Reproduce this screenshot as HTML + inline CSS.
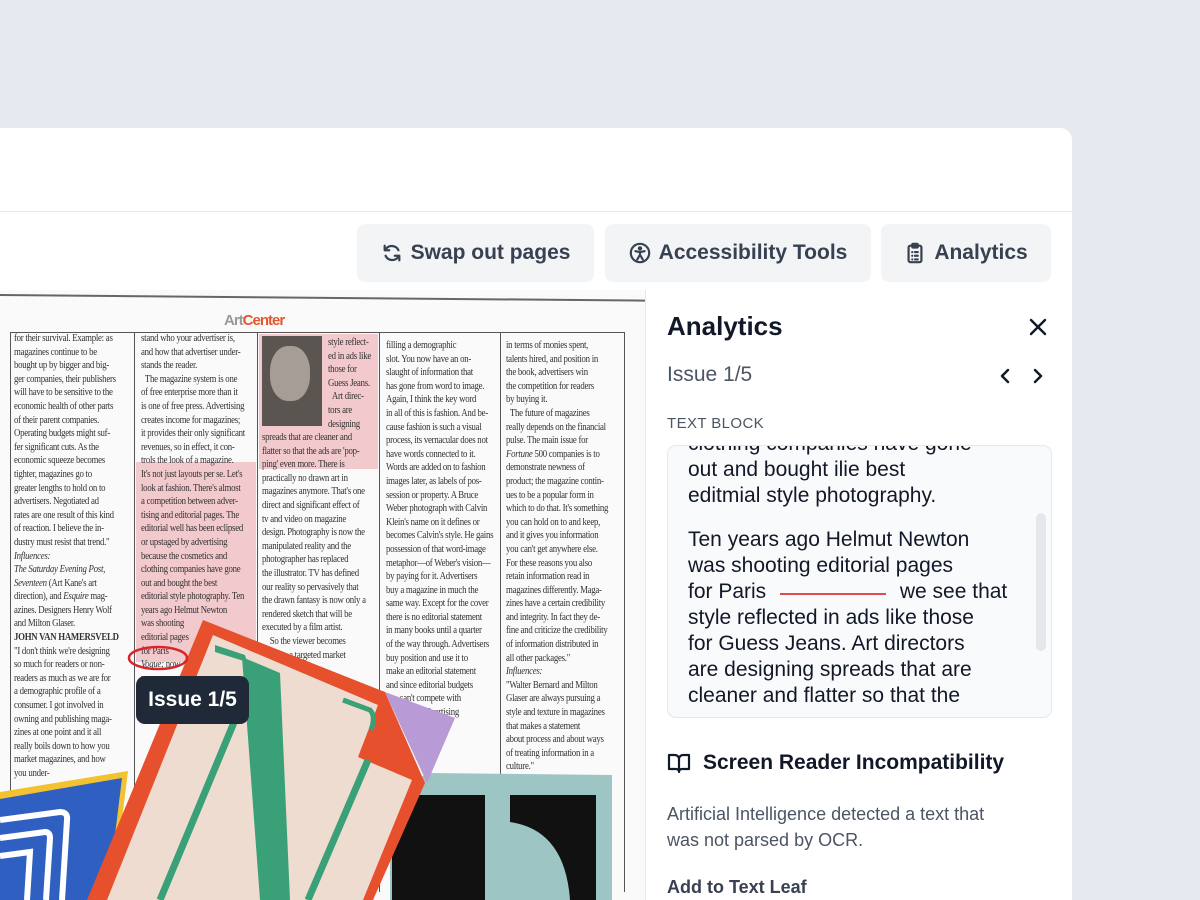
<!DOCTYPE html>
<html><head><meta charset="utf-8"><style>
*{margin:0;padding:0;box-sizing:border-box}
html,body{width:1200px;height:900px;overflow:hidden}
body{background:#e6eaf0;font-family:"Liberation Sans",sans-serif;position:relative}
.card{position:absolute;left:0;top:128px;width:1072px;height:772px;background:#fff;border-radius:0 12px 0 0}
.hr{position:absolute;left:0;top:211px;width:1072px;height:1px;background:#e5e7eb}
.btn{position:absolute;top:224px;height:58px;background:#f3f4f6;border-radius:8px;display:flex;align-items:center;justify-content:center;gap:8px;font-size:21px;color:#374151;font-weight:bold}
.btn svg{width:22px;height:22px}
.mag{position:absolute;left:0;top:290px;width:645px;height:610px;overflow:hidden;background:#fafafa}
.col{position:absolute;font-family:"Liberation Serif",serif;font-size:10px;line-height:13.6px;color:#333;letter-spacing:-0.3px;white-space:nowrap;transform:scaleX(0.88);transform-origin:0 0}
.vl{position:absolute;top:42px;width:1px;background:#555;height:560px}
.side{position:absolute;left:645px;top:290px;width:427px;height:610px;border-left:1px solid #e5e7eb}
</style></head><body>
<div class="card"></div>
<div class="hr"></div>
<div class="btn" style="left:357px;width:237px"><svg viewBox="0 0 24 24" fill="none" stroke="#374151" stroke-width="2.4" stroke-linecap="round" stroke-linejoin="round"><path d="M4 4v5h5M20 20v-5h-5"/><path d="M19 9A8 8 0 0 0 5 8M5 15a8 8 0 0 0 14 1"/></svg>Swap out pages</div>
<div class="btn" style="left:605px;width:266px"><svg viewBox="0 0 24 24" fill="none" stroke="#374151" stroke-width="2.4" stroke-linecap="round" stroke-linejoin="round"><circle cx="12" cy="12" r="10"/><circle cx="12" cy="7" r="1.2" fill="#374151"/><path d="M7 10l5 1 5-1M12 11v3l-3 5M12 14l3 5"/></svg>Accessibility Tools</div>
<div class="btn" style="left:881px;width:170px"><svg viewBox="0 0 24 24" fill="none" stroke="#374151" stroke-width="2.4" stroke-linecap="round" stroke-linejoin="round"><rect x="5" y="4" width="14" height="18" rx="2"/><rect x="9" y="2" width="6" height="4" rx="1"/><path d="M9 11h.01M12 11h3M9 15h.01M12 15h3M9 19h.01M12 19h3"/></svg>Analytics</div>

<div class="mag">
<div style="position:absolute;left:0;top:4px;width:645px;height:2px;background:#666;transform:rotate(0.5deg);transform-origin:0 0"></div>
<div style="position:absolute;left:224px;top:22px;font-weight:bold;font-size:15px;letter-spacing:-1px"><span style="color:#999">Art</span><span style="color:#e4572e">Center</span></div>
<div style="position:absolute;left:10px;top:42px;width:615px;height:1px;background:#555"></div>
<div class="vl" style="left:10px"></div><div class="vl" style="left:134px"></div><div class="vl" style="left:257px"></div><div class="vl" style="left:379px"></div><div class="vl" style="left:500px"></div><div class="vl" style="left:624px"></div>
<div style="position:absolute;left:136px;top:172px;width:120px;height:200px;background:#f2c9cc"></div>
<div style="position:absolute;left:259px;top:44px;width:119px;height:135px;background:#f2c9cc"></div>
<div style="position:absolute;left:262px;top:46px;width:60px;height:90px;background:#5a5550"></div>
<div style="position:absolute;left:270px;top:56px;width:40px;height:55px;border-radius:45%;background:#a59d96"></div>
<div class="col" style="left:14px;top:42px">for their survival. Example: as<br>magazines continue to be<br>bought up by bigger and big-<br>ger companies, their publishers<br>will have to be sensitive to the<br>economic health of other parts<br>of their parent companies.<br>Operating budgets might suf-<br>fer significant cuts. As the<br>economic squeeze becomes<br>tighter, magazines go to<br>greater lengths to hold on to<br>advertisers. Negotiated ad<br>rates are one result of this kind<br>of reaction. I believe the in-<br>dustry must resist that trend."<br><i>Influences:</i><br><i>The Saturday Evening Post,</i><br><i>Seventeen</i> (Art Kane's art<br>direction), and <i>Esquire</i> mag-<br>azines. Designers Henry Wolf<br>and Milton Glaser.<br><b>JOHN VAN HAMERSVELD</b><br>"I don't think we're designing<br>so much for readers or non-<br>readers as much as we are for<br>a demographic profile of a<br>consumer. I got involved in<br>owning and publishing maga-<br>zines at one point and it all<br>really boils down to how you<br>market magazines, and how<br>you under-</div>
<div class="col" style="left:141px;top:42px">stand who your advertiser is,<br>and how that advertiser under-<br>stands the reader.<br>&nbsp;&nbsp;The magazine system is one<br>of free enterprise more than it<br>is one of free press. Advertising<br>creates income for magazines;<br>it provides their only significant<br>revenues, so in effect, it con-<br>trols the look of a magazine.<br>It's not just layouts per se. Let's<br>look at fashion. There's almost<br>a competition between adver-<br>tising and editorial pages. The<br>editorial well has been eclipsed<br>or upstaged by advertising<br>because the cosmetics and<br>clothing companies have gone<br>out and bought the best<br>editorial style photography. Ten<br>years ago Helmut Newton<br>was shooting<br>editorial pages<br>for Paris<br><i>Vogue;</i> now<br>we see</div>
<div class="col" style="left:328px;top:46px">style reflect-<br>ed in ads like<br>those for<br>Guess Jeans.<br>&nbsp;&nbsp;Art direc-<br>tors are<br>designing</div>
<div class="col" style="left:262px;top:141px">spreads that are cleaner and<br>flatter so that the ads are 'pop-<br>ping' even more. There is<br>practically no drawn art in<br>magazines anymore. That's one<br>direct and significant effect of<br>tv and video on magazine<br>design. Photography is now the<br>manipulated reality and the<br>photographer has replaced<br>the illustrator. TV has defined<br>our reality so pervasively that<br>the drawn fantasy is now only a<br>rendered sketch that will be<br>executed by a film artist.<br>&nbsp;&nbsp;&nbsp;&nbsp;So the viewer becomes<br>&nbsp;&nbsp;&nbsp;&nbsp;&nbsp;&nbsp;&nbsp;&nbsp;&nbsp;&nbsp;&nbsp;&nbsp;&nbsp;&nbsp;a targeted market</div>
<div class="col" style="left:386px;top:49px">filling a demographic<br>slot. You now have an on-<br>slaught of information that<br>has gone from word to image.<br>Again, I think the key word<br>in all of this is fashion. And be-<br>cause fashion is such a visual<br>process, its vernacular does not<br>have words connected to it.<br>Words are added on to fashion<br>images later, as labels of pos-<br>session or property. A Bruce<br>Weber photograph with Calvin<br>Klein's name on it defines or<br>becomes Calvin's style. He gains<br>possession of that word-image<br>metaphor—of Weber's vision—<br>by paying for it. Advertisers<br>buy a magazine in much the<br>same way. Except for the cover<br>there is no editorial statement<br>in many books until a quarter<br>of the way through. Advertisers<br>buy position and use it to<br>make an editorial statement<br>and since editorial budgets<br>&nbsp;&nbsp;&nbsp;&nbsp;&nbsp;&nbsp;&nbsp;can't compete with<br>&nbsp;&nbsp;&nbsp;&nbsp;&nbsp;&nbsp;&nbsp;&nbsp;&nbsp;&nbsp;&nbsp;&nbsp;&nbsp;&nbsp;&nbsp;&nbsp;&nbsp;&nbsp;&nbsp;advertising</div>
<div class="col" style="left:506px;top:49px">in terms of monies spent,<br>talents hired, and position in<br>the book, advertisers win<br>the competition for readers<br>by buying it.<br>&nbsp;&nbsp;The future of magazines<br>really depends on the financial<br>pulse. The main issue for<br><i>Fortune</i> 500 companies is to<br>demonstrate newness of<br>product; the magazine contin-<br>ues to be a popular form in<br>which to do that. It's something<br>you can hold on to and keep,<br>and it gives you information<br>you can't get anywhere else.<br>For these reasons you also<br>retain information read in<br>magazines differently. Maga-<br>zines have a certain credibility<br>and integrity. In fact they de-<br>fine and criticize the credibility<br>of information distributed in<br>all other packages."<br><i>Influences:</i><br>"Walter Bernard and Milton<br>Glaser are always pursuing a<br>style and texture in magazines<br>that makes a statement<br>about process and about ways<br>of treating information in a<br>culture."</div>
<svg style="position:absolute;left:0;top:-290px" width="645" height="1190" viewBox="0 0 645 1190">
<polygon points="0,792 128,771 112,900 0,900" fill="#f2c230"/>
<polygon points="0,799 122,778 107,900 0,900" fill="#2f5fc0"/>
<path d="M0 820 L60 812 Q68 812 67 820 L62 900 M0 838 L45 832 Q50 832 50 838 L46 900 M0 856 L30 852 L27 900" fill="none" stroke="#fff" stroke-width="6"/>
<polygon points="429,773 612,775 612,900 390,900 390,793" fill="#9cc5c4"/>
<rect x="392" y="795" width="93" height="105" fill="#111"/>
<path d="M510 795 H596 V900 H570 Q565 830 510 822 Z" fill="#111"/>
<polygon points="385,692 455,718 427,783" fill="#b79ad6"/>
<polygon points="203,620 385,692 425,783 373,900 87,900" fill="#e6502c"/>
<polygon points="213,635 378,705 358,757 412,780 363,900 107,900" fill="#efdcd0"/>
<polygon points="215,645 245,655 247,662 215,652" fill="#3aa077"/>
<polygon points="242,657 280,673 290,900 260,900" fill="#3aa077"/>
<line x1="235" y1="720" x2="160" y2="900" stroke="#3aa077" stroke-width="7"/>
<line x1="368" y1="760" x2="308" y2="900" stroke="#3aa077" stroke-width="7"/>
<path d="M343 700 L370 710 Q376 716 371 730" fill="none" stroke="#3aa077" stroke-width="5"/>
<ellipse cx="158" cy="658" rx="29" ry="11" fill="none" stroke="#d7262b" stroke-width="2.5"/>
</svg>
<div style="position:absolute;left:136px;top:386px;width:113px;height:48px;background:#1f2937;border-radius:9px;color:#fff;font-size:21px;font-weight:bold;display:flex;align-items:center;justify-content:center">Issue 1/5</div>
</div>

<div class="side">
<div style="position:absolute;left:21px;top:21px;font-size:26px;font-weight:bold;color:#111827">Analytics</div>
<svg style="position:absolute;left:382px;top:27px" width="20" height="20" viewBox="0 0 20 20" stroke="#111827" stroke-width="2.4" stroke-linecap="round"><path d="M3 3L17 17M17 3L3 17"/></svg>
<div style="position:absolute;left:21px;top:73px;font-size:21px;color:#4b5563">Issue 1/5</div>
<svg style="position:absolute;left:352px;top:77px" width="60" height="18" viewBox="0 0 60 18" fill="none" stroke="#111827" stroke-width="2.4" stroke-linecap="round" stroke-linejoin="round"><path d="M10 3L4 9L10 15M37 3L43 9L37 15"/></svg>
<div style="position:absolute;left:21px;top:125px;font-size:15px;color:#4b5563;letter-spacing:.4px">TEXT BLOCK</div>
<div style="position:absolute;left:21px;top:155px;width:385px;height:273px;background:#f9fafb;border:1px solid #e5e7eb;border-radius:9px;overflow:hidden">
<div style="position:absolute;left:20px;top:-15px;font-size:21px;line-height:26px;color:#111827;width:360px">clothing companies have gone<br>out and bought ilie best<br>editmial style photography.<div style="height:18px"></div>Ten years ago Helmut Newton<br>was shooting editorial pages<br>for Paris <span style="display:inline-block;width:106px;border-bottom:2px solid #e5484d;margin:0 8px;vertical-align:3px"></span> we see that<br>style reflected in ads like those<br>for Guess Jeans. Art directors<br>are designing spreads that are<br>cleaner and flatter so that the</div>
<div style="position:absolute;left:368px;top:67px;width:10px;height:138px;background:#e5e7eb;border-radius:5px"></div>
</div>
<svg style="position:absolute;left:21px;top:462px" width="24" height="22" viewBox="0 0 24 22" fill="none" stroke="#111827" stroke-width="2.2" stroke-linejoin="round"><path d="M2 3h6a4 4 0 0 1 4 4v13a3 3 0 0 0-3-3H2zM22 3h-6a4 4 0 0 0-4 4v13a3 3 0 0 1 3-3h7z"/></svg>
<div style="position:absolute;left:57px;top:461px;font-size:21px;font-weight:bold;color:#111827">Screen Reader Incompatibility</div>
<div style="position:absolute;left:21px;top:511px;font-size:18px;line-height:26px;color:#4b5563">Artificial Intelligence detected a text that<br>was not parsed by OCR.</div>
<div style="position:absolute;left:21px;top:587px;font-size:18px;font-weight:bold;color:#374151">Add to Text Leaf</div>
</div>
</body></html>
